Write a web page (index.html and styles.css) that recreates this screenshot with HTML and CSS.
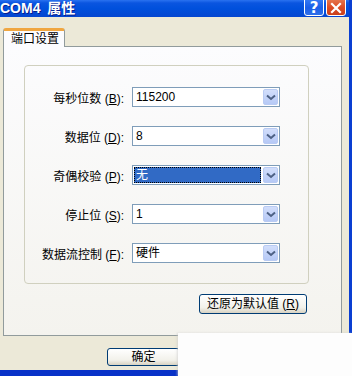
FILE: index.html
```html
<!DOCTYPE html>
<html lang="zh">
<head>
    <meta charset="UTF-8">
    <meta name="viewport" content="width=device-width, initial-scale=1.0">
    <title>COM4 属性</title>
    <link rel="stylesheet" href="styles.css">
</head>
<body>
    <div class="window">
        <div class="titlebar">
            <span class="title">COM4 属性</span>
            <div class="caption-btns">
                <span class="cap-btn help">?</span>
                <span class="cap-btn close">
                    <svg width="12" height="12" viewBox="0 0 12 12"><path d="M2 2 L10 10 M10 2 L2 10" stroke="#fff" stroke-width="2.2" stroke-linecap="square"/></svg>
                </span>
            </div>
        </div>

        <div class="client">
            <div class="tabs">
                <span class="tab active">端口设置</span>
            </div>
            <div class="page">
                <div class="group">
                    <div class="row">
                        <label>每秒位数 (<u>B</u>):</label>
                        <div class="combo"><span class="value">115200</span><span class="drop"><svg width="10" height="7" viewBox="0 0 10 7"><path d="M1 1.5 L5 5 L9 1.5" fill="none" stroke="#4d6185" stroke-width="2"/></svg></span></div>
                    </div>
                    <div class="row">
                        <label>数据位 (<u>D</u>):</label>
                        <div class="combo"><span class="value">8</span><span class="drop"><svg width="10" height="7" viewBox="0 0 10 7"><path d="M1 1.5 L5 5 L9 1.5" fill="none" stroke="#4d6185" stroke-width="2"/></svg></span></div>
                    </div>
                    <div class="row">
                        <label>奇偶校验 (<u>P</u>):</label>
                        <div class="combo"><span class="value selected">无</span><span class="drop"><svg width="10" height="7" viewBox="0 0 10 7"><path d="M1 1.5 L5 5 L9 1.5" fill="none" stroke="#4d6185" stroke-width="2"/></svg></span></div>
                    </div>
                    <div class="row">
                        <label>停止位 (<u>S</u>):</label>
                        <div class="combo"><span class="value">1</span><span class="drop"><svg width="10" height="7" viewBox="0 0 10 7"><path d="M1 1.5 L5 5 L9 1.5" fill="none" stroke="#4d6185" stroke-width="2"/></svg></span></div>
                    </div>
                    <div class="row">
                        <label>数据流控制 (<u>F</u>):</label>
                        <div class="combo"><span class="value">硬件</span><span class="drop"><svg width="10" height="7" viewBox="0 0 10 7"><path d="M1 1.5 L5 5 L9 1.5" fill="none" stroke="#4d6185" stroke-width="2"/></svg></span></div>
                    </div>
                </div>
                <div class="page-actions">
                    <button class="xp-btn restore">还原为默认值 (<u>R</u>)</button>
                </div>
            </div>
            <div class="dialog-actions">
                <button class="xp-btn">确定</button>
                <button class="xp-btn">取消</button>
                <button class="xp-btn">应用</button>
            </div>
        </div>
    </div>

    <!-- marca blanca encima de la esquina -->
    <div class="watermark"></div>
</body>
</html>
```

FILE: styles.css
```css
body {
    margin: 0;
    width: 352px;
    height: 376px;
    overflow: hidden;
    position: relative;
    font-family: "Liberation Sans", "Noto Sans CJK SC", sans-serif;
    font-size: 12px;
    color: #000;
    background: #ece9d8;
}

.window {
    width: 352px;
    height: 376px;
    box-sizing: border-box;
    border-right: 3px solid #0a3fd2;
    border-bottom: 6px solid #0832c8;
    background: #ece9d8;
    display: flex;
    flex-direction: column;
}

.titlebar {
    height: 17px;
    flex: none;
    display: flex;
    align-items: center;
    justify-content: space-between;
    padding-right: 3px;
    background: linear-gradient(#2a72f0 0, #0a55e0 3px, #0050dc 50%, #0546d0 100%);
    overflow: hidden;
}

.title {
    color: #fff;
    font-weight: bold;
    font-size: 14px;
    line-height: 17px;
    margin-left: 0;
    word-spacing: 3px;
    text-shadow: 1px 1px 0 #0a1e8c;
}

.caption-btns {
    display: flex;
    gap: 2px;
    align-self: flex-start;
    margin-top: -4px;
}

.cap-btn {
    width: 20px;
    height: 20px;
    box-sizing: border-box;
    border: 1px solid #fff;
    border-radius: 3px;
    display: flex;
    align-items: center;
    justify-content: center;
    padding-top: 3px;
}

.help {
    background: linear-gradient(#3c82f8, #1a5ee8 60%, #2f6fe8);
    color: #fff;
    font-weight: bold;
    font-size: 15px;
    font-family: "DejaVu Sans", sans-serif;
}

.close {
    background: linear-gradient(#e8845c, #dc4a22 60%, #c8401c);
}

.client {
    flex: 1;
    padding: 11px 0 0 3px;
}

.tabs {
    display: flex;
    height: 18px;
}

.tab {
    box-sizing: border-box;
    width: 62px;
    height: 19px;
    padding-left: 7px;
    line-height: 17px;
    background: #fcfcfe;
    border: 1px solid #919b9c;
    border-bottom: none;
    border-top: 3px solid #f0a640;
    border-radius: 3px 3px 0 0;
    position: relative;
    z-index: 1;
}

.page {
    box-sizing: border-box;
    width: 339px;
    height: 290px;
    border: 1px solid #919b9c;
    background: linear-gradient(#fcfcfe, #f4f3ee);
    display: flex;
    flex-direction: column;
}

.group {
    box-sizing: border-box;
    width: 285px;
    height: 219px;
    margin: 18px 0 0 20px;
    padding-top: 21px;
    border: 1px solid #d0d0bf;
    border-radius: 4px;
    display: flex;
    flex-direction: column;
    gap: 19px;
}

.row {
    display: grid;
    grid-template-columns: 102px 148px;
    column-gap: 5px;
    align-items: center;
    height: 20px;
}

.row label {
    text-align: right;
    white-space: nowrap;
    padding-right: 3px;
}

.combo {
    box-sizing: border-box;
    height: 20px;
    border: 1px solid #7f9db9;
    background: #fff;
    display: flex;
    align-items: center;
    padding: 1px;
}

.value {
    flex: 1;
    padding-left: 2px;
    line-height: 16px;
}

.value.selected {
    margin-right: 2px;
    background: #316ac5;
    color: #fff;
    outline: 1px dotted #000;
    outline-offset: -1px;
}

.drop {
    width: 15px;
    height: 16px;
    box-sizing: border-box;
    border: 1px solid #b9cbf3;
    border-radius: 2px;
    background: linear-gradient(#d2defb, #b6c9f6);
    display: flex;
    align-items: center;
    justify-content: center;
}

.page-actions {
    display: flex;
    justify-content: flex-end;
    padding-right: 34px;
    margin-top: 10px;
}

.xp-btn {
    box-sizing: border-box;
    height: 20px;
    padding: 0;
    border: 1px solid #003c74;
    border-radius: 3px;
    background: linear-gradient(#ffffff, #f2f1ea 70%, #d8d2c2);
    font-family: "Liberation Sans", "Noto Sans CJK SC", sans-serif;
    font-size: 12px;
    line-height: 16px;
    color: #000;
}

.restore {
    width: 108px;
}

.dialog-actions {
    display: flex;
    gap: 6px;
    margin: 12px 0 0 104px;
}

.dialog-actions .xp-btn {
    width: 73px;
    height: 18px;
}

.watermark {
    position: absolute;
    left: 178px;
    top: 333px;
    right: 0;
    bottom: 0;
    background: #fdfdfd;
    box-shadow: -1px 0 2px rgba(200, 200, 200, 0.6);
}
```
